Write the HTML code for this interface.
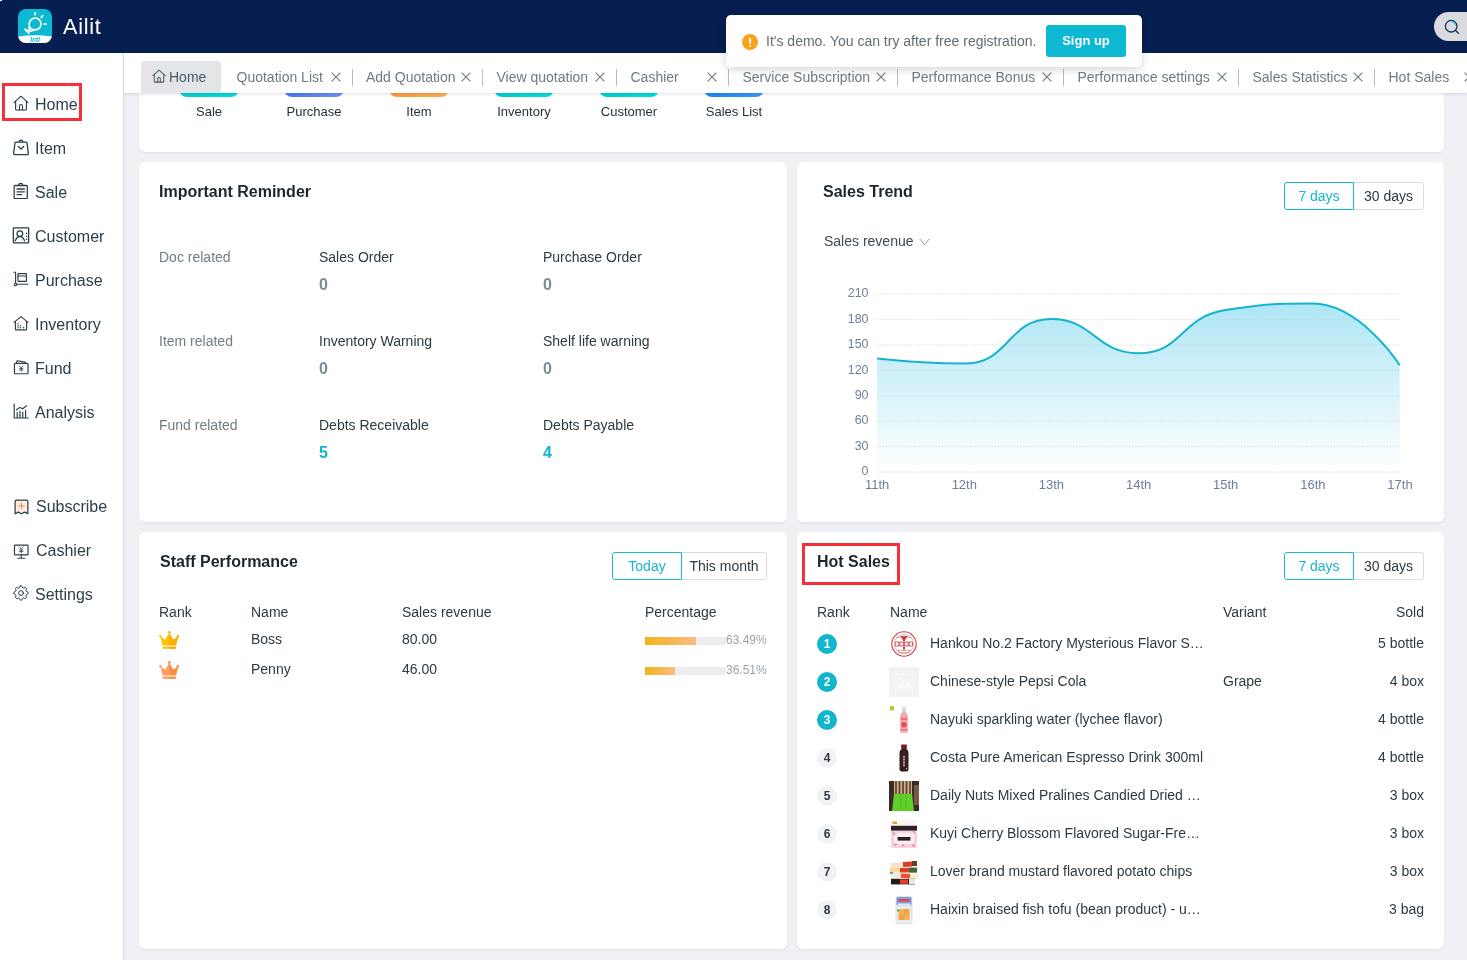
<!DOCTYPE html>
<html><head><meta charset="utf-8">
<style>
*{box-sizing:border-box;margin:0;padding:0}
html,body{width:1467px;height:960px;overflow:hidden}
body{font-family:"Liberation Sans",sans-serif;background:#eff1f5;position:relative;color:#24333b;font-size:14px}
#root{position:absolute;left:0;top:0;width:1467px;height:960px;will-change:transform;overflow:hidden}
#hdr{z-index:6;position:absolute;left:0;top:0;width:1467px;height:53px;background:#071e50}
#logo{position:absolute;left:18px;top:9px;width:34px;height:34px;border-radius:8px;background:#0cb9d3;overflow:hidden}
#brand{position:absolute;left:63px;top:13.4px;font-size:21.6px;line-height:27px;color:#fff;letter-spacing:.75px}
#search{position:absolute;left:1434px;top:12px;width:60px;height:29px;border-radius:15px;background:#d9dbe1}
#side{position:absolute;left:0;top:53px;width:123px;height:907px;background:#fff;box-shadow:1px 0 3px rgba(0,20,60,.10)}
.mi{position:absolute;left:13px;height:20px;font-size:16px;line-height:20px;color:#2a3f4a;white-space:nowrap}
.mi svg{position:absolute;left:0;top:1px}
.mi span{position:absolute;left:22px;top:1px}
#tabs{position:absolute;left:124px;top:53px;width:1343px;height:40px;background:#fff;box-shadow:0 1px 3px rgba(0,20,60,.14);z-index:5}
.card{position:absolute;background:#fff;border-radius:6px;box-shadow:0 1px 2px rgba(0,20,60,.08)}
.h{position:absolute;font-weight:bold;font-size:16px;line-height:20px;color:#1c262c;white-space:nowrap}
.t{position:absolute;white-space:nowrap;line-height:18px}

#tabs .tb{position:absolute;top:0;left:12px;height:40px;display:flex;align-items:flex-end;white-space:nowrap}
.tab{height:32px;display:flex;align-items:center;justify-content:space-between;font-size:14px;color:#6d7b82;position:relative;padding:0 12px 0 13.5px}
.tab .x{margin-left:0;flex:none;width:10px;height:10px;display:block}
.tab:after{content:"";position:absolute;right:0;top:8px;height:17px;width:1px;background:#b5bcc2}
.tab.home{justify-content:flex-start;background:#e4e5e9;border-radius:4px 4px 0 0;color:#4a5a62;padding:0 14px 0 11px;margin-right:2px;width:80px;margin-left:5px}
.tab.home:after{display:none}
#toast{position:absolute;left:726px;top:15px;width:416px;height:52px;background:#fff;border-radius:5px;box-shadow:0 2px 10px rgba(0,0,0,.18);z-index:10}
#toast .ic{position:absolute;left:16px;top:19px;width:16px;height:16px;border-radius:8px;background:#faa21e}
#toast .ic:before{content:"";position:absolute;left:7px;top:3.5px;width:2px;height:6px;background:#fff;border-radius:1px}
#toast .ic:after{content:"";position:absolute;left:7px;top:10.5px;width:2px;height:2px;background:#fff;border-radius:1px}
#toast .tx{position:absolute;left:40px;top:17px;font-size:14px;line-height:18px;color:#5f6d74;white-space:nowrap}
#toast .btn{position:absolute;left:320px;top:10px;width:80px;height:32px;border-radius:3px;background:#0db8d3;color:#fff;font-weight:bold;font-size:13px;line-height:32px;text-align:center}

.lbl{color:#6f7d85}.dk{color:#2b3a43}
.num{position:absolute;font-weight:bold;font-size:16px;line-height:20px;color:#7d8b93}
.num.on{color:#14b4cf}
.seg{position:absolute;top:20px;height:28px;display:flex;font-size:14px;line-height:26px;text-align:center;white-space:nowrap}
.seg div{height:28px;border:1px solid #d9dce2;color:#2b3a43}
.seg .a{border-color:#19b6d0;color:#19b6d0;border-radius:3px 0 0 3px;position:relative;z-index:1}
.seg .b{border-radius:0 3px 3px 0;margin-left:-1px}
.sc{position:absolute;top:-30px;width:60px;height:67px;border-radius:8px}
.scl{color:#23323b;position:absolute;top:42.5px;width:105px;text-align:center;font-size:13px;line-height:18px}
.ax{font-family:"Liberation Sans",sans-serif;font-size:12.4px;fill:#6e7f99}.axx{font-size:13px}

.pb{position:absolute;left:506px;width:81px;height:8px;background:#ededed}
.pb i{display:block;height:8px;background:linear-gradient(90deg,#f2b417,#fbbb85)}
.pc{position:absolute;left:587px;font-size:12px;line-height:14px;color:#9aa2aa;white-space:nowrap}
.rk{position:absolute;left:20px;width:20px;height:20px;border-radius:10px;font-size:12px;font-weight:bold;line-height:20px;text-align:center;background:#f1f2f5;color:#2b3a43}
.rk.on{background:#12b5ce;color:#fff}
.th{position:absolute;left:92px;width:30px;height:30px;overflow:hidden}
.nm{position:absolute;left:133px;white-space:nowrap;line-height:18px;color:#2b3a43}
.sd{position:absolute;right:20px;line-height:18px;color:#2b3a43;white-space:nowrap}
</style></head>
<body>
<div id="root">
<svg width="0" height="0" style="position:absolute"><defs><filter id="bl" x="-10%" y="-10%" width="120%" height="120%"><feGaussianBlur stdDeviation=".35"/></filter></defs></svg>
<div id="hdr"><div style="position:absolute;left:0;top:0;width:2px;height:1px;background:#fff"></div>
  <div id="logo"><svg width="34" height="34" viewBox="0 0 34 34" style="display:block"><path d="M0 27.6Q17 25 34 27.6V34H0z" fill="#fff"/><g fill="none" stroke="#fff" stroke-linecap="round" stroke-linejoin="round"><path d="M17.2 9.200c3.400 0 5.800 2.600 5.800 5.700 0 3.300-2.700 5.900-6 5.900-1.600 0-3.200-.5-4.400-1.500-1.100-1.400-1.600-2.800-1.500-4.400.2-3.100 2.800-5.700 6.100-5.700z" stroke-width="1.7"/><path d="M6.800 20.400 11 24.400M7 20.300 12.300 22.400 16.400 21.200M10.800 18.400 12.300 22.400" stroke-width="1.5"/><path d="M17 3.900V5.500M23.400 8.400 24.600 6.700M26.300 15H27.800" stroke-width="1.9"/></g><text x="17" y="33" text-anchor="middle" font-family="Liberation Sans" font-style="italic" font-weight="bold" font-size="6.5" fill="#0cb9d3">Intl</text></svg></div>
  <div id="brand">Ailit</div>
  <div id="search"><svg width="16" height="16" viewBox="0 0 16 16" style="position:absolute;left:10px;top:7px" fill="none" stroke="#1d3658" stroke-width="1.3" stroke-linecap="round"><circle cx="7.2" cy="7.2" r="5.8"/><path d="M11.6 11.6 14.6 14.4"/><path d="M8 2.6A4.4 4.4 0 0 1 11.4 5.6" stroke="#2cc7de" stroke-width="1.2"/></svg></div>
</div>
<div id="side">
<div style="position:absolute;left:2px;top:30px;width:80px;height:38px;border:3px solid #f92f37"></div>
<div class="mi" style="top:41px"><svg width="16" height="16" viewBox="0 0 16 16" fill="none" stroke="#2a3f4a" stroke-width="1.15" stroke-linecap="round" stroke-linejoin="round" ><path d="M1 7.6 8 1.2 15 7.6"/><path d="M2.6 6.4V14.2a.8.8 0 0 0 .8.8h9.2a.8.8 0 0 0 .8-.8V6.4"/><path d="M6.5 15V11a1.5 1.5 0 0 1 3 0v4"/></svg><span style="left:22px">Home</span></div>
<div class="mi" style="top:85px"><svg width="18" height="18" style="left:-1px;top:-0.5px" viewBox="0 0 16 16" fill="none" stroke="#2a3f4a" stroke-width="1.15" stroke-linecap="round" stroke-linejoin="round" ><path d="M3.6 3.6h8.8a1 1 0 0 1 1 .9l1.1 9a1.2 1.2 0 0 1-1.2 1.3H2.7a1.2 1.2 0 0 1-1.2-1.3l1.1-9a1 1 0 0 1 1-.9z"/><path d="M6.4 3.4a1.6 1.6 0 0 1 3.2 0"/><path d="M5.6 7.6 8 9.8l2.4-2.2"/></svg><span style="left:22px">Item</span></div>
<div class="mi" style="top:129px"><svg width="17.5" height="17.5" style="left:-0.7px;top:-0.5px" viewBox="0 0 16 16" fill="none" stroke="#2a3f4a" stroke-width="1.15" stroke-linecap="round" stroke-linejoin="round" ><rect x="2" y="3.2" width="12" height="12" rx=".8"/><path d="M6.3 3a1.7 1.7 0 0 1 3.4 0"/><path d="M4.6 6.4h6.8M4.6 9h6.8M4.6 11.6h4.2"/></svg><span style="left:22px">Sale</span></div>
<div class="mi" style="top:173px"><svg width="18" height="18" style="left:-1px;top:0px" viewBox="0 0 16 16" fill="none" stroke="#2a3f4a" stroke-width="1.15" stroke-linecap="round" stroke-linejoin="round" ><rect x="1.2" y="1.6" width="13.6" height="13.4" rx=".6"/><circle cx="7" cy="6.8" r="2.5"/><path d="M2.9 13.2c.7-2.6 2.3-3.8 4.1-3.8s3.4 1.2 4.1 3.8"/><path d="M13 6.4v.3M13 9v.3M13 11.6v.3"/></svg><span style="left:22px">Customer</span></div>
<div class="mi" style="top:217px"><svg width="16" height="16" viewBox="0 0 16 16" fill="none" stroke="#2a3f4a" stroke-width="1.15" stroke-linecap="round" stroke-linejoin="round" ><path d="M.9 1.2h1.7V12"/><circle cx="2.6" cy="13.4" r="1.2"/><path d="M4 13.2h10.8"/><rect x="5" y="2.6" width="8.4" height="7.8" rx=".4"/><path d="M5 5h8.4"/></svg><span style="left:22px">Purchase</span></div>
<div class="mi" style="top:261px"><svg width="16" height="16" viewBox="0 0 16 16" fill="none" stroke="#2a3f4a" stroke-width="1.15" stroke-linecap="round" stroke-linejoin="round" ><path d="M1 7.4 8 1.6 15 7.4"/><path d="M2.4 6.6V14.3a.6.6 0 0 0 .6.6H13a.6.6 0 0 0 .6-.6V6.6"/><path d="M5 8.6v.2M5 10.6v.2M5 12.6v.2M7.4 10.6v.2M7.4 12.6v.2M10.6 12.6v.2" stroke-width="1.4"/></svg><span style="left:22px">Inventory</span></div>
<div class="mi" style="top:305px"><svg width="16.5" height="17" style="left:-0.2px;top:0.2px" viewBox="0 0 16 16" fill="none" stroke="#2a3f4a" stroke-width="1.15" stroke-linecap="round" stroke-linejoin="round" ><rect x="1.4" y="5" width="13.2" height="10" rx="1"/><path d="M3.2 5 4 2.4 11.6 3.8 12.4 5"/><path d="M6.300 7.400 8 9.600l1.700-2.200M8 9.600v3M6.400 10h3.200M6.400 11.400h3.200" stroke-width=".75"/></svg><span style="left:22px">Fund</span></div>
<div class="mi" style="top:349px"><svg width="16" height="16" viewBox="0 0 16 16" fill="none" stroke="#2a3f4a" stroke-width="1.15" stroke-linecap="round" stroke-linejoin="round" ><path d="M1.2 1v14h14"/><path d="M4.2 14.6V9.4M7 14.6V8M9.8 14.6V9M12.6 14.6V7.4"/><path d="M3.4 6.8 6.8 4.4 9.6 5.8 13.6 2.8"/></svg><span style="left:22px">Analysis</span></div>
<div class="mi" style="top:443px"><svg width="17" height="17.6" style="left:-0.5px;top:2px" viewBox="0 0 16 16" fill="none" stroke="#2a3f4a" stroke-width="1.15" stroke-linecap="round" stroke-linejoin="round" ><path d="M3.2 1.8h9.6a1.2 1.2 0 0 1 1.2 1.2V14.6L11 13 8 14.6 5 13 2 14.6V3a1.2 1.2 0 0 1 1.2-1.2z" fill="#fdebe1"/><path d="M8 4.6v5M5.5 7.1h5" stroke="#f5803e" stroke-width=".85"/></svg><span style="left:23px">Subscribe</span></div>
<div class="mi" style="top:487px"><svg width="16.5" height="16.5" style="left:-0.2px;top:3px" viewBox="0 0 16 16" fill="none" stroke="#2a3f4a" stroke-width="1.15" stroke-linecap="round" stroke-linejoin="round" ><rect x="1.4" y="2" width="13.2" height="9.6" rx=".6"/><path d="M8 11.6v3M4.6 14.8h6.8"/><path d="M6.2 3.8 8 6.2 9.800 3.800M8 6.200v3.600M6.400 6.900h3.200M6.400 8.300h3.200" stroke-width=".75"/></svg><span style="left:23px">Cashier</span></div>
<div class="mi" style="top:531px"><svg width="16" height="16" viewBox="0 0 16 16" fill="none" stroke="#2a3f4a" stroke-width="1.15" stroke-linecap="round" stroke-linejoin="round" ><path d="M7.29 0.83 L8.71 0.83 L9.63 2.64 L10.64 3.06 L12.57 2.43 L13.57 3.43 L12.94 5.36 L13.36 6.37 L15.17 7.29 L15.17 8.71 L13.36 9.63 L12.94 10.64 L13.57 12.57 L12.57 13.57 L10.64 12.94 L9.63 13.36 L8.71 15.17 L7.29 15.17 L6.37 13.36 L5.36 12.94 L3.43 13.57 L2.43 12.57 L3.06 10.64 L2.64 9.63 L0.83 8.71 L0.83 7.29 L2.64 6.37 L3.06 5.36 L2.43 3.43 L3.43 2.43 L5.36 3.06 L6.37 2.64Z" stroke-width="1"/><circle cx="8" cy="8" r="2.4" stroke-width="1"/></svg><span style="left:22px">Settings</span></div>
</div>
<div id="tabs"><div class="tb"><div class="tab home"><svg width="14" height="14" viewBox="0 0 16 16" fill="none" stroke="#4b5d66" stroke-width="1.2" stroke-linecap="round" stroke-linejoin="round" style="margin-right:3px;margin-top:-2px"><path d="M1 7.6 8 1.2 15 7.6"/><path d="M2.6 6.4V14.2a.8.8 0 0 0 .8.8h9.2a.8.8 0 0 0 .8-.8V6.4"/><path d="M6.5 15V11a1.5 1.5 0 0 1 3 0v4"/></svg>Home</div><div class="tab" id="tab0" style="width:129.5px"><span>Quotation List</span><svg class="x" viewBox="0 0 10 10"><path d="M.6.6l8.8 8.8M9.4.6.6 9.4" stroke="#6d7b82" stroke-width="1.1" fill="none"/></svg></div><div class="tab" id="tab1" style="width:130.5px"><span>Add Quotation</span><svg class="x" viewBox="0 0 10 10"><path d="M.6.6l8.8 8.8M9.4.6.6 9.4" stroke="#6d7b82" stroke-width="1.1" fill="none"/></svg></div><div class="tab" id="tab2" style="width:134px"><span>View quotation</span><svg class="x" viewBox="0 0 10 10"><path d="M.6.6l8.8 8.8M9.4.6.6 9.4" stroke="#6d7b82" stroke-width="1.1" fill="none"/></svg></div><div class="tab" id="tab3" style="width:112px"><span>Cashier</span><svg class="x" viewBox="0 0 10 10"><path d="M.6.6l8.8 8.8M9.4.6.6 9.4" stroke="#6d7b82" stroke-width="1.1" fill="none"/></svg></div><div class="tab" id="tab4" style="width:169px"><span>Service Subscription</span><svg class="x" viewBox="0 0 10 10"><path d="M.6.6l8.8 8.8M9.4.6.6 9.4" stroke="#6d7b82" stroke-width="1.1" fill="none"/></svg></div><div class="tab" id="tab5" style="width:166px"><span>Performance Bonus</span><svg class="x" viewBox="0 0 10 10"><path d="M.6.6l8.8 8.8M9.4.6.6 9.4" stroke="#6d7b82" stroke-width="1.1" fill="none"/></svg></div><div class="tab" id="tab6" style="width:175px"><span>Performance settings</span><svg class="x" viewBox="0 0 10 10"><path d="M.6.6l8.8 8.8M9.4.6.6 9.4" stroke="#6d7b82" stroke-width="1.1" fill="none"/></svg></div><div class="tab" id="tab7" style="width:136px"><span>Sales Statistics</span><svg class="x" viewBox="0 0 10 10"><path d="M.6.6l8.8 8.8M9.4.6.6 9.4" stroke="#6d7b82" stroke-width="1.1" fill="none"/></svg></div><div class="tab" id="tab8" style="width:111px"><span>Hot Sales</span><svg class="x" viewBox="0 0 10 10"><path d="M.6.6l8.8 8.8M9.4.6.6 9.4" stroke="#6d7b82" stroke-width="1.1" fill="none"/></svg></div></div></div>
<div id="toast"><div class="ic"></div><div class="tx">It's demo. You can try after free registration.</div><div class="btn">Sign up</div></div>
<div class="card" id="c0" style="left:139px;top:60px;width:1305px;height:92px;overflow:hidden"><div class="sc" style="left:40px;background:linear-gradient(90deg,#00cfd3,#00dedb)"></div><div class="scl" style="left:17.5px">Sale</div><div class="sc" style="left:145px;background:linear-gradient(90deg,#4c7af1,#7391ee)"></div><div class="scl" style="left:122.5px">Purchase</div><div class="sc" style="left:250px;background:linear-gradient(90deg,#ff9836,#ffad55)"></div><div class="scl" style="left:227.5px">Item</div><div class="sc" style="left:355px;background:linear-gradient(90deg,#00cfd3,#00dedb)"></div><div class="scl" style="left:332.5px">Inventory</div><div class="sc" style="left:460px;background:linear-gradient(90deg,#00cfd3,#00dedb)"></div><div class="scl" style="left:437.5px">Customer</div><div class="sc" style="left:565px;background:linear-gradient(90deg,#1488fa,#3f9af5)"></div><div class="scl" style="left:542.5px">Sales List</div></div>
<div class="card" id="c1" style="left:139px;top:162px;width:648px;height:360px"><div class="h" style="left:20px;top:20px">Important Reminder</div><div class="t lbl" style="left:20px;top:86px">Doc related</div><div class="t dk" style="left:180px;top:86px">Sales Order</div><div class="num" style="left:180px;top:113px">0</div><div class="t dk" style="left:404px;top:86px">Purchase Order</div><div class="num" style="left:404px;top:113px">0</div><div class="t lbl" style="left:20px;top:170px">Item related</div><div class="t dk" style="left:180px;top:170px">Inventory Warning</div><div class="num" style="left:180px;top:197px">0</div><div class="t dk" style="left:404px;top:170px">Shelf life warning</div><div class="num" style="left:404px;top:197px">0</div><div class="t lbl" style="left:20px;top:254px">Fund related</div><div class="t dk" style="left:180px;top:254px">Debts Receivable</div><div class="num on" style="left:180px;top:281px">5</div><div class="t dk" style="left:404px;top:254px">Debts Payable</div><div class="num on" style="left:404px;top:281px">4</div></div>
<div class="card" id="c2" style="left:797px;top:162px;width:647px;height:360px"><div class="h" style="left:26px;top:20px">Sales Trend</div><div class="seg" style="left:487px"><div class="a" style="width:70px">7 days</div><div class="b" style="width:71px">30 days</div></div><div class="t" style="left:27px;top:70px;color:#3b4a54">Sales revenue</div><svg style="position:absolute;left:122px;top:76px" width="11" height="8" viewBox="0 0 11 8"><path d="M.7.8 5.5 6.8 10.3.8" fill="none" stroke="#8d99a3" stroke-width="1"/></svg><svg width="647" height="359" style="position:absolute;left:0;top:0"><defs><linearGradient id="ag" x1="0" y1="0" x2="0" y2="1"><stop offset="0" stop-color="#aee6f5"/><stop offset="1" stop-color="#ffffff"/></linearGradient></defs><path d="M80.1 196.6C80.1 196.6 126.1 201.6 167.2 201.6C213.2 201.6 209.8 157.0 254.3 157.0C296.9 157.0 298.7 191.3 341.4 191.3C385.8 191.3 382.6 155.1 428.5 148.0C469.7 141.6 476.4 141.6 515.6 141.6C563.5 141.6 602.7 203.3 602.7 203.3L603.0 310L80.1 310Z" fill="url(#ag)" transform=""/><path d="M80.1 310.0H603.0" stroke="#c9ced6" stroke-width="1" stroke-dasharray="1.2 1.6" opacity=".8"/><text class="ax" x="71.5" y="313.2" text-anchor="end">0</text><path d="M80.1 284.6H603.0" stroke="#c9ced6" stroke-width="1" stroke-dasharray="1.2 1.6" opacity=".8"/><text class="ax" x="71.5" y="287.8" text-anchor="end">30</text><path d="M80.1 259.2H603.0" stroke="#c9ced6" stroke-width="1" stroke-dasharray="1.2 1.6" opacity=".8"/><text class="ax" x="71.5" y="262.4" text-anchor="end">60</text><path d="M80.1 233.8H603.0" stroke="#c9ced6" stroke-width="1" stroke-dasharray="1.2 1.6" opacity=".8"/><text class="ax" x="71.5" y="237.0" text-anchor="end">90</text><path d="M80.1 208.4H603.0" stroke="#c9ced6" stroke-width="1" stroke-dasharray="1.2 1.6" opacity=".8"/><text class="ax" x="71.5" y="211.6" text-anchor="end">120</text><path d="M80.1 183.0H603.0" stroke="#c9ced6" stroke-width="1" stroke-dasharray="1.2 1.6" opacity=".8"/><text class="ax" x="71.5" y="186.2" text-anchor="end">150</text><path d="M80.1 157.6H603.0" stroke="#c9ced6" stroke-width="1" stroke-dasharray="1.2 1.6" opacity=".8"/><text class="ax" x="71.5" y="160.8" text-anchor="end">180</text><path d="M80.1 132.2H603.0" stroke="#c9ced6" stroke-width="1" stroke-dasharray="1.2 1.6" opacity=".8"/><text class="ax" x="71.5" y="135.4" text-anchor="end">210</text><path d="M80.1 196.6C80.1 196.6 126.1 201.6 167.2 201.6C213.2 201.6 209.8 157.0 254.3 157.0C296.9 157.0 298.7 191.3 341.4 191.3C385.8 191.3 382.6 155.1 428.5 148.0C469.7 141.6 476.4 141.6 515.6 141.6C563.5 141.6 602.7 203.3 602.7 203.3" fill="none" stroke="#14b4cf" stroke-width="2"/><text class="ax axx" x="80.1" y="326.6" text-anchor="middle">11th</text><text class="ax axx" x="167.3" y="326.6" text-anchor="middle">12th</text><text class="ax axx" x="254.4" y="326.6" text-anchor="middle">13th</text><text class="ax axx" x="341.6" y="326.6" text-anchor="middle">14th</text><text class="ax axx" x="428.7" y="326.6" text-anchor="middle">15th</text><text class="ax axx" x="515.9" y="326.6" text-anchor="middle">16th</text><text class="ax axx" x="603.0" y="326.6" text-anchor="middle">17th</text></svg></div>
<div class="card" id="c3" style="left:139px;top:532px;width:648px;height:417px"><div class="h" style="left:21px;top:20px">Staff Performance</div><div class="seg" style="left:473px"><div class="a" style="width:70px">Today</div><div class="b" style="width:86px">This month</div></div><div class="t dk" style="left:20px;top:71px">Rank</div><div class="t dk" style="left:112px;top:71px">Name</div><div class="t dk" style="left:263px;top:71px">Sales revenue</div><div class="t dk" style="left:506px;top:71px">Percentage</div><div style="position:absolute;left:19.800px;top:99px"><svg width="20.4" height="17.8" viewBox="0 0 20.4 17.8"><defs><clipPath id="Rffc000"><rect x="10.2" y="0" width="11" height="18"/></clipPath></defs><g fill="#ffc000"><path d="M1.3 5.6 6.2 8.8 10.2 2 14.2 8.8 19.1 5.6 17.1 14H3.500z"/><circle cx="10.2" cy="1.4" r="1.3"/><circle cx="1.400" cy="5.300" r="1.250"/><circle cx="19" cy="5.300" r="1.250"/><rect x="3.300" y="15.800" width="13.900" height="2" rx="1"/></g><g fill="#ffab00" clip-path="url(#Rffc000)"><path d="M1.3 5.6 6.2 8.8 10.2 2 14.2 8.8 19.1 5.6 17.1 14H3.500z"/><circle cx="10.2" cy="1.4" r="1.3"/><circle cx="19" cy="5.300" r="1.250"/><rect x="3.300" y="15.800" width="13.900" height="2" rx="1"/></g><rect x="3.600" y="14.100" width="13.400" height="1.700" fill="#ffdc85"/></svg></div><div class="t dk" style="left:112px;top:98px">Boss</div><div class="t dk" style="left:263px;top:98px">80.00</div><div class="pb" style="top:105px"><i style="width:63.49%"></i></div><div class="pc" style="top:101px">63.49%</div><div style="position:absolute;left:19.800px;top:129px"><svg width="20.4" height="17.8" viewBox="0 0 20.4 17.8"><defs><clipPath id="Rff9f66"><rect x="10.2" y="0" width="11" height="18"/></clipPath></defs><g fill="#ff9f66"><path d="M1.3 5.6 6.2 8.8 10.2 2 14.2 8.8 19.1 5.6 17.1 14H3.500z"/><circle cx="10.2" cy="1.4" r="1.3"/><circle cx="1.400" cy="5.300" r="1.250"/><circle cx="19" cy="5.300" r="1.250"/><rect x="3.300" y="15.800" width="13.900" height="2" rx="1"/></g><g fill="#ff8b40" clip-path="url(#Rff9f66)"><path d="M1.3 5.6 6.2 8.8 10.2 2 14.2 8.8 19.1 5.6 17.1 14H3.500z"/><circle cx="10.2" cy="1.4" r="1.3"/><circle cx="19" cy="5.300" r="1.250"/><rect x="3.300" y="15.800" width="13.900" height="2" rx="1"/></g><rect x="3.600" y="14.100" width="13.400" height="1.700" fill="#ffcaa8"/></svg></div><div class="t dk" style="left:112px;top:128px">Penny</div><div class="t dk" style="left:263px;top:128px">46.00</div><div class="pb" style="top:135px"><i style="width:36.51%"></i></div><div class="pc" style="top:131px">36.51%</div></div>
<div class="card" id="c4" style="left:797px;top:532px;width:647px;height:417px"><div style="position:absolute;left:5px;top:11px;width:98px;height:42px;border:3px solid #f92f37"></div><div class="h" style="left:20px;top:20px">Hot Sales</div><div class="seg" style="left:487px"><div class="a" style="width:70px">7 days</div><div class="b" style="width:71px">30 days</div></div><div class="t dk" style="left:20px;top:71px">Rank</div><div class="t dk" style="left:93px;top:71px">Name</div><div class="t dk" style="left:426px;top:71px">Variant</div><div class="sd" style="top:71px">Sold</div><div class="rk on" style="top:102px">1</div><div class="th" style="top:97px"><svg width="30" height="30" viewBox="0 0 30 30"><circle cx="15" cy="15" r="12.2" fill="#fff" stroke="#c9444a" stroke-width="1.1"/><circle cx="15" cy="15" r="9.6" fill="none" stroke="#d77a7e" stroke-width=".6"/><path d="M11 7h8l-3 4.2v9.6h-2v-9.6z" fill="#c9444a"/><rect x="5.6" y="12.4" width="18.8" height="5.2" fill="#fff"/><path d="M6.2 13h3.6v4H6.2zM10.8 13h3.6v4h-3.6zM15.6 13h3.6v4h-3.6zM20.2 13h3.4v4h-3.4z" fill="none" stroke="#c9444a" stroke-width=".9"/><path d="M8 21.5h14M9.5 23.5h11M8 8.5h3M19 8.5h3" stroke="#d77a7e" stroke-width=".7"/></svg></div><div class="nm" style="top:102px">Hankou No.2 Factory Mysterious Flavor S…</div><div class="sd" style="top:102px">5 bottle</div><div class="rk on" style="top:140px">2</div><div class="th" style="top:135px"><svg width="30" height="30" viewBox="0 0 30 30"><rect width="30" height="30" fill="#f3f3f3"/><rect x="6.6" y="7.6" width="16.8" height="14.8" rx="1" fill="none" stroke="#fafafa" stroke-width="1.2"/><circle cx="11" cy="11.6" r="1.7" fill="#fafafa"/><path d="M8 21.2 12.6 15.6 15.4 18.6 18.4 14.4 22.6 21.2z" fill="#fafafa"/></svg></div><div class="nm" style="top:140px">Chinese-style Pepsi Cola</div><div class="t dk" style="left:426px;top:140px">Grape</div><div class="sd" style="top:140px">4 box</div><div class="rk on" style="top:178px">3</div><div class="th" style="top:173px"><svg width="30" height="30" viewBox="0 0 30 30"><rect x=".8" y="1.2" width="4.200" height="4.200" fill="#a6d13a"/><g filter="url(#bl)"><path d="M13.200 2.600h3.600v4.600l2 2.800v16.800a1 1 0 0 1-1 1h-5.600a1 1 0 0 1-1-1V10l2-2.800z" fill="#f4a9af"/><rect x="13" y="2.200" width="4" height="4.800" rx=".8" fill="#d5d8de"/><circle cx="15" cy="19.800" r="2.800" fill="#e2525b"/><rect x="11.600" y="12.600" width="6.800" height="2.600" fill="#e8777f"/><rect x="11.600" y="24" width="6.800" height="1.600" fill="#e8777f"/></g></svg></div><div class="nm" style="top:178px">Nayuki sparkling water (lychee flavor)</div><div class="sd" style="top:178px">4 bottle</div><div class="rk" style="top:216px">4</div><div class="th" style="top:211px"><svg width="30" height="30" viewBox="0 0 30 30"><g filter="url(#bl)"><path d="M12.600 3h4.800v3c1.400 1 2.100 2.300 2.100 4v16.600a1.800 1.800 0 0 1-1.800 1.800h-5.400a1.800 1.800 0 0 1-1.800-1.800V10c0-1.700.7-3 2.100-4z" fill="#3a1c1a"/><rect x="12" y="1.600" width="6" height="3.600" rx="1" fill="#7a222b"/><path d="M15 13v11" stroke="#e0d3cf" stroke-width="1.600" stroke-dasharray="1.800 1"/><circle cx="17.600" cy="25.600" r=".8" fill="#e8a33a"/></g></svg></div><div class="nm" style="top:216px">Costa Pure American Espresso Drink 300ml</div><div class="sd" style="top:216px">4 bottle</div><div class="rk" style="top:254px">5</div><div class="th" style="top:249px"><svg width="30" height="30" viewBox="0 0 30 30"><g filter="url(#bl)"><rect width="30" height="30" fill="#3b2a22"/><rect x="5" y="0" width="18" height="14" fill="#c9b08a"/><path d="M7 0v14M10.500 0v14M14 0v14M17.500 0v14M21 0v14" stroke="#5a3d28" stroke-width="1.6"/><path d="M5 13h18l2 17H3z" fill="#5ed02b"/><path d="M12 14v16M17 14v16" stroke="#4cb822" stroke-width="1"/><rect x="25" y="4" width="5" height="20" fill="#7a5846"/></g></svg></div><div class="nm" style="top:254px">Daily Nuts Mixed Pralines Candied Dried …</div><div class="sd" style="top:254px">3 box</div><div class="rk" style="top:292px">6</div><div class="th" style="top:287px"><svg width="30" height="30" viewBox="0 0 30 30"><g filter="url(#bl)"><rect x="2" y="1" width="26" height="28" rx="2" fill="#f6d3dd"/><rect x="2" y="1" width="26" height="5.600" fill="#fbf3f4"/><rect x="3.600" y="2.600" width="4.400" height="2.400" fill="#d8a43a"/><rect x="2" y="6.800" width="26" height="4.800" fill="#2a2222"/><rect x="5" y="14" width="20" height="11" rx="2" fill="#fbeef1"/><rect x="8.600" y="18" width="12.800" height="3.600" fill="#2a2222"/><path d="M4 13l2 3M24 12l2 2M5 26l3-1M23 26l3 1M13 27l2-1" stroke="#e58aa6" stroke-width="1.600"/></g></svg></div><div class="nm" style="top:292px">Kuyi Cherry Blossom Flavored Sugar-Fre…</div><div class="sd" style="top:292px">3 box</div><div class="rk" style="top:330px">7</div><div class="th" style="top:325px"><svg width="30" height="30" viewBox="0 0 30 30"><g filter="url(#bl)"><g><rect x="2" y="5" width="26" height="5" fill="#f4e6c8" transform="rotate(-4 15 7)"/><rect x="14" y="5" width="9" height="5" fill="#e23b2e" transform="rotate(-4 15 7)"/><rect x="23" y="4" width="5" height="5" fill="#6a3b2a"/><rect x="1" y="10.600" width="27" height="5" fill="#f7d9a0"/><rect x="11" y="11" width="9" height="4.400" fill="#e23b2e"/><rect x="20" y="10.600" width="8" height="5" fill="#3c6b32"/><rect x="2" y="16.200" width="27" height="5" fill="#f3ead6" transform="rotate(3 15 18)"/><rect x="12" y="16.600" width="9" height="4.400" fill="#e8502e" transform="rotate(3 15 18)"/><rect x="1" y="0" width="3" height="2" fill="#35b7d6" transform="translate(0 15)"/><rect x="2" y="21.800" width="24" height="5.600" fill="#1d1b1b"/><rect x="11" y="22.400" width="8" height="4.400" fill="#e23b2e"/><rect x="20" y="22" width="6" height="5" fill="#f0e8d8"/></g></g></svg></div><div class="nm" style="top:330px">Lover brand mustard flavored potato chips</div><div class="sd" style="top:330px">3 box</div><div class="rk" style="top:368px">8</div><div class="th" style="top:363px"><svg width="30" height="30" viewBox="0 0 30 30"><g filter="url(#bl)"><rect x="7" y="1.600" width="16" height="27" rx="2" fill="#e8edf4" stroke="#c9d0da" stroke-width=".6"/><rect x="7.400" y="2" width="15.200" height="8.400" rx="1.600" fill="#7f9de0"/><rect x="9.400" y="4" width="11.200" height="2.800" rx="1.200" fill="#e2493d"/><rect x="9" y="8.400" width="12" height="3.600" fill="#dfe9f6"/><path d="M9.600 14h10.800v11H9.600z" fill="#f5a13c"/><path d="M9.600 14h5v5.400h-5zM15.600 19.600h4.800V25h-4.800z" fill="#f7b65c"/><rect x="8" y="14.600" width="2.400" height="2" fill="#5fae4a"/></g></svg></div><div class="nm" style="top:368px">Haixin braised fish tofu (bean product) - u…</div><div class="sd" style="top:368px">3 bag</div></div>
</div>
</body></html>
